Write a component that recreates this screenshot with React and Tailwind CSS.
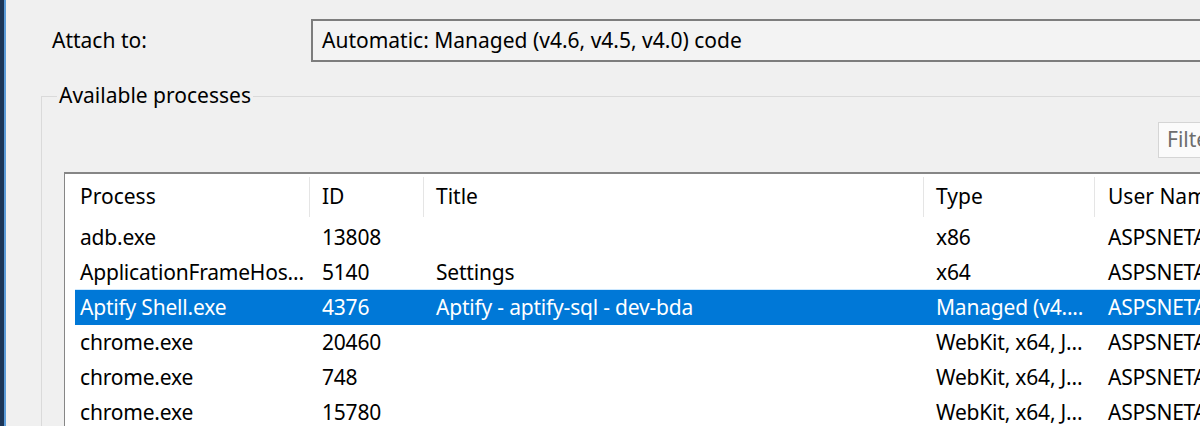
const columns = [
  { key: "process", label: "Process", width: "w-[245px]", pad: "pl-[15px]" },
  { key: "id", label: "ID", width: "w-[114px]", pad: "pl-[12px]" },
  { key: "title", label: "Title", width: "w-[500px]", pad: "pl-[12px]" },
  { key: "type", label: "Type", width: "w-[171px]", pad: "pl-[12px]" },
  { key: "user", label: "User Name", width: "w-[200px]", pad: "pl-[13px]" },
];

const processes = [
  { process: "adb.exe", id: "13808", title: "", type: "x86", user: "ASPSNETAD" },
  { process: "ApplicationFrameHos...", id: "5140", title: "Settings", type: "x64", user: "ASPSNETAD" },
  { process: "Aptify Shell.exe", id: "4376", title: "Aptify - aptify-sql - dev-bda", type: "Managed (v4....", user: "ASPSNETAD", selected: true },
  { process: "chrome.exe", id: "20460", title: "", type: "WebKit, x64, J...", user: "ASPSNETAD" },
  { process: "chrome.exe", id: "748", title: "", type: "WebKit, x64, J...", user: "ASPSNETAD" },
  { process: "chrome.exe", id: "15780", title: "", type: "WebKit, x64, J...", user: "ASPSNETAD" },
];

function ProcessRow({ row }) {
  if (row.selected) {
    return (
      <div className="flex h-[35px] items-center ml-[10px] bg-[#0078d7] text-white shadow-[0_-1px_0_#cce8ff]">
        {columns.map((col, i) => (
          <div
            key={col.key}
            className={`${i === 0 ? "w-[235px] pl-[5px]" : `${col.width} ${col.pad}`} shrink-0 whitespace-nowrap tracking-[-0.2px]`}
          >
            {row[col.key]}
          </div>
        ))}
      </div>
    );
  }
  return (
    <div className="flex h-[35px] items-center">
      {columns.map((col) => (
        <div key={col.key} className={`${col.width} ${col.pad} shrink-0 whitespace-nowrap tracking-[-0.2px]`}>
          {row[col.key]}
        </div>
      ))}
    </div>
  );
}

export default function App() {
  return (
    <div className="flex w-[1200px] h-[426px] overflow-hidden bg-[#f0f0f0] text-black font-['Noto_Sans',sans-serif] text-[21px] leading-[1.3]">
      <div className="w-[4px] bg-[#1b3557] shrink-0" />
      <div className="w-[2px] bg-[#5b9bd8] shrink-0" />

      <div className="flex-1 flex flex-col pt-[19px] min-w-0">
        <div className="flex items-center h-[43px]">
          <div className="w-[305px] pl-[46px] shrink-0">Attach to:</div>
          <div className="flex items-center h-[43px] w-[1000px] shrink-0 pl-[9px] border-2 border-[#7d7d7d] bg-[#f3f3f3]">
            Automatic: Managed (v4.6, v4.5, v4.0) code
          </div>
        </div>

        <div className="relative flex-1 flex flex-col mt-[34px] ml-[35px] border-t border-l border-[#dadada]">
          <span className="absolute left-[15px] -top-[15px] px-[2px] bg-[#f0f0f0]">Available processes</span>

          <div className="flex pt-[25px]">
            <div className="ml-[1116px] w-[80px] h-[36px] shrink-0 flex items-center pl-[8px] border border-[#d5d5d5] bg-[#fbfbfb] text-[#6d6d6d]">
              Filter
            </div>
          </div>

          <div className="flex-1 mt-[14px] ml-[22px] border-t-2 border-l border-[#868686] bg-white">
            <div className="flex h-[46px] py-[3px]">
              {columns.map((col) => (
                <div
                  key={col.key}
                  className={`${col.width} ${col.pad} shrink-0 flex items-center whitespace-nowrap border-r border-[#e5e5e5]`}
                >
                  {col.label}
                </div>
              ))}
            </div>
            {processes.map((row) => (
              <ProcessRow key={row.id} row={row} />
            ))}
          </div>
        </div>
      </div>
    </div>
  );
}
